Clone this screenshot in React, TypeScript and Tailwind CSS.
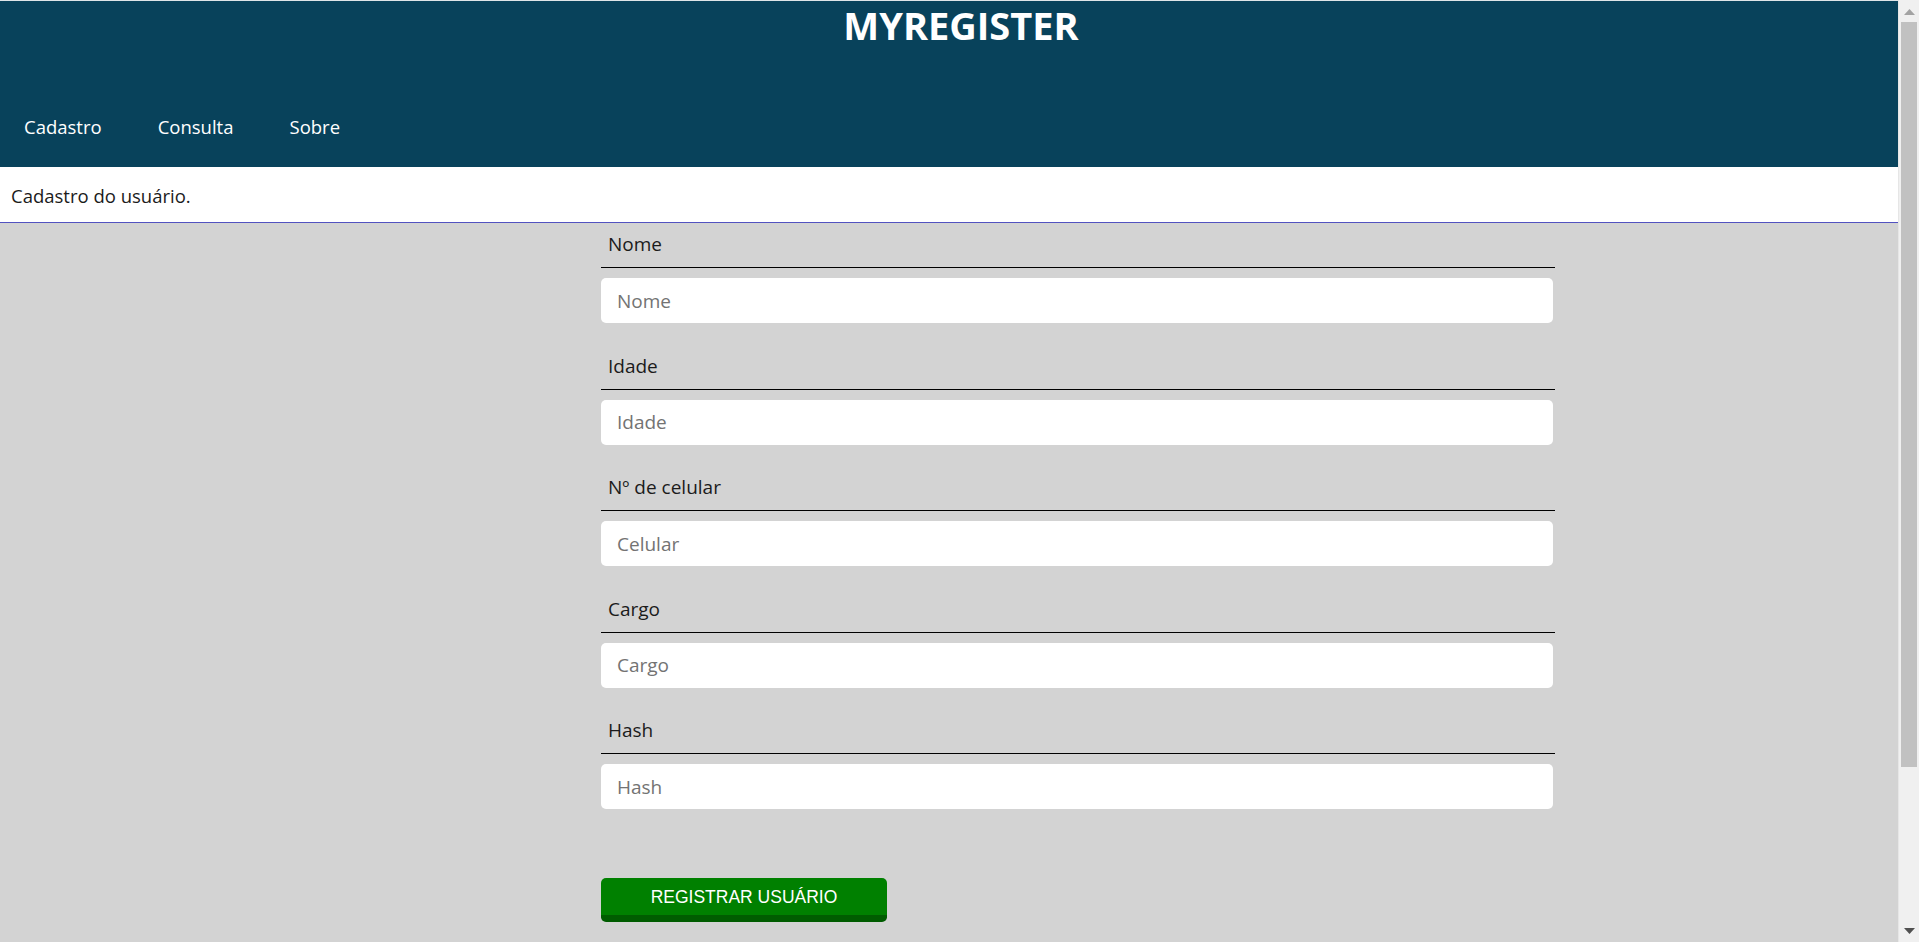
const FIELDS = [
  { label: "Nome", placeholder: "Nome" },
  { label: "Idade", placeholder: "Idade" },
  { label: "Nº de celular", placeholder: "Celular" },
  { label: "Cargo", placeholder: "Cargo" },
  { label: "Hash", placeholder: "Hash" },
];

// fake windows-style scrollbar overlaying the right edge, as in the capture
function Scrollbar() {
  return (
    <div className="fixed top-0 right-0 flex h-[942px] w-[21px] flex-col items-center border-l border-[#e6e6e6] bg-[#f0f0f0]">
      <div className="flex h-[21px] w-full items-center justify-center pt-[2px]">
        <svg width="11" height="6" viewBox="0 0 11 6">
          <path d="M0 6 L5.5 0 L11 6 Z" fill="#a3a3a3" />
        </svg>
      </div>
      <div className="mt-px h-[745px] w-[16px] bg-[#c1c1c1]" />
      <div className="flex-1" />
      <div className="flex h-[21px] w-full items-center justify-center pb-[2px]">
        <svg width="11" height="6" viewBox="0 0 11 6">
          <path d="M0 0 L11 0 L5.5 6 Z" fill="#505050" />
        </svg>
      </div>
    </div>
  );
}

export default function App() {
  return (
    <div className="min-h-[1135px] w-[1898px] bg-[#d3d3d3] font-['Open_Sans',sans-serif] text-[18.5px] leading-[25px] text-[#1b1b1b]">
      <header className="flex h-[167px] flex-col justify-between border-t border-[#dfe5e8] bg-[#08425b] pt-[2px] pb-[28px] text-white">
        <h1 className="pl-[24px] text-center text-[38px] font-bold leading-[45px]">MYREGISTER</h1>
        <nav className="flex gap-[56px] pl-[24px]">
          <a href="#">Cadastro</a>
          <a href="#">Consulta</a>
          <a href="#">Sobre</a>
        </nav>
      </header>

      <div className="flex h-[56px] items-center border-b border-[#5252c0] bg-white pl-[11px] pt-[2px]">
        Cadastro do usuário.
      </div>

      <form className="ml-[601px] w-[954px] pb-[214px] text-[19px]" onSubmit={(e) => e.preventDefault()}>
        {FIELDS.map((f, i) => (
          <div key={f.label} className={i === 0 ? "mt-[9px]" : "mt-[30.5px]"}>
            <label className="block border-b border-black pb-[10px] pl-[7px]">{f.label}</label>
            <input
              placeholder={f.placeholder}
              className="mt-[10px] block h-[45px] w-[952px] rounded-[5px] bg-white px-[16px] outline-none placeholder:text-[#737373]"
            />
          </div>
        ))}

        <button
          type="submit"
          className="mt-[69px] h-[44px] w-[286px] rounded-[5px] border-b-[7px] border-[#005c00] bg-[#008000] pt-[1px] font-['Liberation_Sans',Arial,sans-serif] text-[17.5px] text-white"
        >
          REGISTRAR USUÁRIO
        </button>
      </form>

      <Scrollbar />
    </div>
  );
}
